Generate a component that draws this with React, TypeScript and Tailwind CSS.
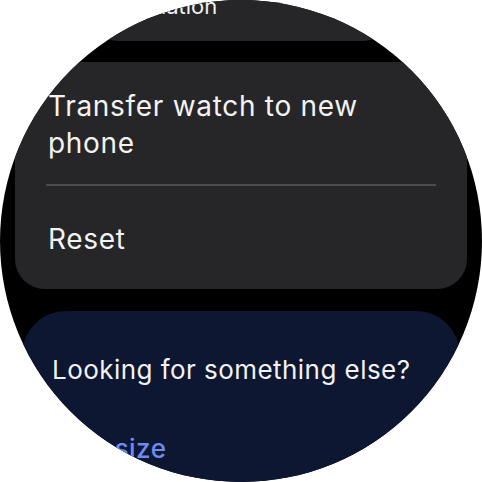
export default function App() {
  return (
    <div className="w-[482px] h-[482px] bg-white" style={{ fontFamily: "Inter, 'Noto Sans', sans-serif" }}>
      <div className="w-full h-full rounded-full bg-black overflow-hidden flex flex-col items-center">
        {/* previous item, scaled down near the top edge */}
        <div className="w-[302px] h-[80px] -mt-[39px] shrink-0 rounded-[28px] bg-[#262628] flex flex-col justify-end pl-[20px] pb-[21px]">
          <span className="text-[22px] leading-[28px] text-[#f1f1f1]">Evaluation</span>
        </div>

        {/* system actions card */}
        <div className="w-[452px] mt-[21px] shrink-0 rounded-[30px] bg-[#262628] px-[31px] pt-[26px] pb-[31px] flex flex-col">
          <span className="w-[360px] pl-[2px] text-[28px] leading-[37px] tracking-[0.7px] text-[#f3f3f3]">Transfer watch to new phone</span>
          <div className="mt-[22px] h-[2px] bg-[#4b4b4d]" />
          <span className="mt-[35px] pl-[2px] text-[28px] leading-[37px] tracking-[0.7px] text-[#f3f3f3]">Reset</span>
        </div>

        {/* suggestions card */}
        <div className="w-[438px] mt-[22px] shrink-0 h-[220px] rounded-[44px] bg-[#0e1732] pl-[30px] pt-[42px] flex flex-col">
          <span className="text-[26px] leading-[34px] tracking-[0.45px] text-[#f2f2f2]">Looking for something else?</span>
          <span className="mt-[45px] text-[26px] leading-[34px] tracking-[0.45px] font-medium text-[#6d8bf3]">Text size</span>
        </div>
      </div>
    </div>
  );
}
